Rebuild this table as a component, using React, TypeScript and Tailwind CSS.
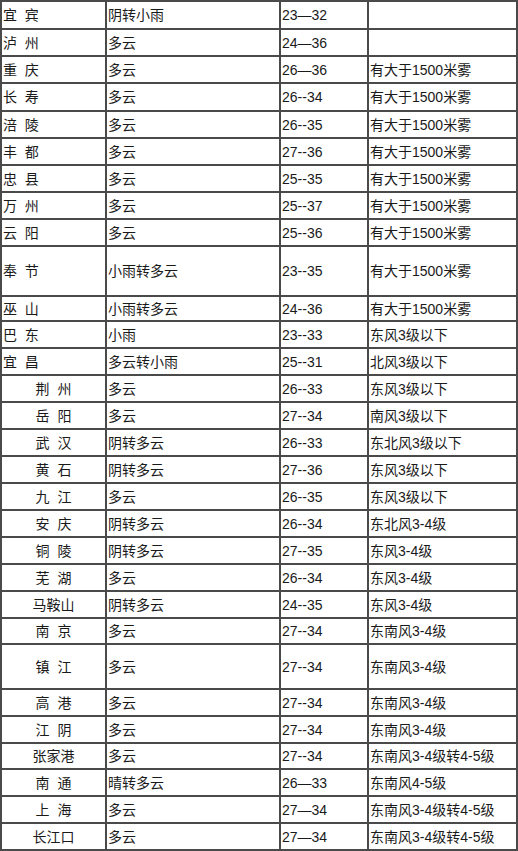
import React from "react";

type Row = { name: string; center?: boolean; weather: string; temp: string; note: string; h: number };

const rows: Row[] = [
  { name: "宜  宾", weather: "阴转小雨", temp: "23—32", note: "", h: 28 },
  { name: "泸  州", weather: "多云", temp: "24—36", note: "", h: 27 },
  { name: "重  庆", weather: "多云", temp: "26—36", note: "有大于1500米雾", h: 27 },
  { name: "长  寿", weather: "多云", temp: "26--34", note: "有大于1500米雾", h: 28 },
  { name: "涪  陵", weather: "多云", temp: "26--35", note: "有大于1500米雾", h: 27 },
  { name: "丰  都", weather: "多云", temp: "27--36", note: "有大于1500米雾", h: 27 },
  { name: "忠  县", weather: "多云", temp: "25--35", note: "有大于1500米雾", h: 27 },
  { name: "万  州", weather: "多云", temp: "25--37", note: "有大于1500米雾", h: 27 },
  { name: "云  阳", weather: "多云", temp: "25--36", note: "有大于1500米雾", h: 27 },
  { name: "奉  节", weather: "小雨转多云", temp: "23--35", note: "有大于1500米雾", h: 50 },
  { name: "巫  山", weather: "小雨转多云", temp: "24--36", note: "有大于1500米雾", h: 25 },
  { name: "巴  东", weather: "小雨", temp: "23--33", note: "东风3级以下", h: 27 },
  { name: "宜  昌", weather: "多云转小雨", temp: "25--31", note: "北风3级以下", h: 27 },
  { name: "荆  州", center: true, weather: "多云", temp: "26--33", note: "东风3级以下", h: 27 },
  { name: "岳  阳", center: true, weather: "多云", temp: "27--34", note: "南风3级以下", h: 27 },
  { name: "武  汉", center: true, weather: "阴转多云", temp: "26--33", note: "东北风3级以下", h: 27 },
  { name: "黄  石", center: true, weather: "阴转多云", temp: "27--36", note: "东风3级以下", h: 27 },
  { name: "九  江", center: true, weather: "多云", temp: "26--35", note: "东风3级以下", h: 27 },
  { name: "安  庆", center: true, weather: "阴转多云", temp: "26--34", note: "东北风3-4级", h: 27 },
  { name: "铜  陵", center: true, weather: "阴转多云", temp: "27--35", note: "东风3-4级", h: 27 },
  { name: "芜  湖", center: true, weather: "多云", temp: "26--34", note: "东风3-4级", h: 27 },
  { name: "马鞍山", center: true, weather: "阴转多云", temp: "24--35", note: "东风3-4级", h: 27 },
  { name: "南  京", center: true, weather: "多云", temp: "27--34", note: "东南风3-4级", h: 26 },
  { name: "镇  江", center: true, weather: "多云", temp: "27--34", note: "东南风3-4级", h: 45 },
  { name: "高  港", center: true, weather: "多云", temp: "27--34", note: "东南风3-4级", h: 27 },
  { name: "江  阴", center: true, weather: "多云", temp: "27--34", note: "东南风3-4级", h: 27 },
  { name: "张家港", center: true, weather: "多云", temp: "27--34", note: "东南风3-4级转4-5级", h: 26 },
  { name: "南  通", center: true, weather: "晴转多云", temp: "26—33", note: "东南风4-5级", h: 27 },
  { name: "上  海", center: true, weather: "多云", temp: "27—34", note: "东南风3-4级转4-5级", h: 27 },
  { name: "长江口", center: true, weather: "多云", temp: "27—34", note: "东南风3-4级转4-5级", h: 27 },
];

const cell = "border border-[#4a4a4a] px-[1px] py-0 align-middle whitespace-pre";

export default function App() {
  return (
    <div className="bg-white w-[518px] text-[14px] leading-[16px] text-[#1a1a1a] [font-family:'Liberation_Sans','Noto_Sans_CJK_SC',sans-serif]">
      <table className="w-[518px] table-fixed border-separate border-spacing-0 border border-[#4a4a4a]">
        <colgroup>
          <col className="w-[105px]" />
          <col className="w-[174px]" />
          <col className="w-[88px]" />
          <col className="w-[149px]" />
        </colgroup>
        <tbody>
          {rows.map((r, i) => (
            <tr key={i} style={{ height: r.h }}>
              <td className={`${cell} ${r.center ? "text-center" : "text-left"}`}>{r.name}</td>
              <td className={cell}>{r.weather}</td>
              <td className={cell}>{r.temp}</td>
              <td className={cell}>{r.note}</td>
            </tr>
          ))}
        </tbody>
      </table>
    </div>
  );
}
